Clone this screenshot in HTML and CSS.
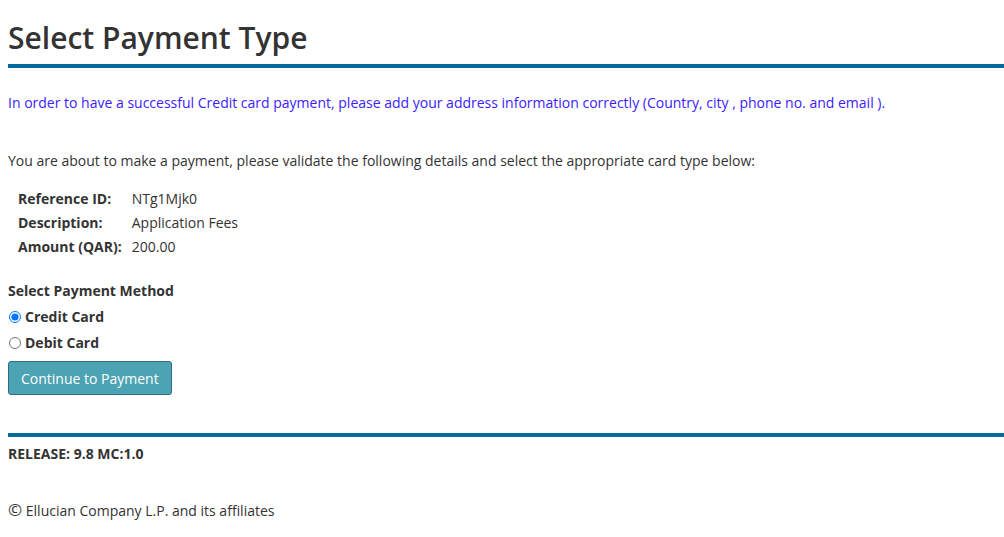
FILE: index.html
```html
<!DOCTYPE html>
<html lang="en">
<head>
  <meta charset="UTF-8">
  <title>Select Payment Type</title>
  <link rel="stylesheet" href="styles.css">
</head>
<body>

<h1 class="pt-title">Select Payment Type</h1>

<p class="pt-notice">In order to have a successful Credit card payment, please add your address information correctly (Country, city , phone no. and email ).</p>

<p class="pt-intro">You are about to make a payment, please validate the following details and select the appropriate card type below:</p>

<table class="pt-details">
  <tr>
    <th>Reference ID:</th>
    <td>NTg1Mjk0</td>
  </tr>
  <tr>
    <th>Description:</th>
    <td>Application Fees</td>
  </tr>
  <tr>
    <th>Amount (QAR):</th>
    <td>200.00</td>
  </tr>
</table>

<form class="pt-form">
  <div class="pt-label">Select Payment Method</div>
  <div class="pt-options">
    <label class="pt-radio">
      <input type="radio" name="cardType" value="credit" checked> Credit Card
    </label>
    <label class="pt-radio">
      <input type="radio" name="cardType" value="debit"> Debit Card
    </label>
  </div>
  <button type="button" class="pt-btn">Continue to Payment</button>
</form>

<div class="pt-footer">
  <div class="pt-release">RELEASE: 9.8 MC:1.0</div>
  <div class="pt-copy"><span class="pt-copy-sign">&copy;</span> Ellucian Company L.P. and its affiliates</div>
</div>

</body>
</html>
```

FILE: styles.css
```css
body {
  font-family: 'Open Sans', sans-serif;
  font-size: 14px;
  color: #333333;
  margin: 0 0 0 8px;
  background-color: #ffffff;
}

.pt-title {
  font-size: 30px;
  font-weight: 600;
  margin: 0;
  padding: 18px 0 6px;
  line-height: 40px;
  border-bottom: 4px solid #056b9e;
}

.pt-notice {
  color: #3a22ff;
  margin: 24px 0 0;
  line-height: 22px;
}

.pt-intro {
  margin: 36px 0 0;
  line-height: 22px;
}

.pt-details {
  border-collapse: collapse;
  margin: 15px 0 0 6px;
}

.pt-details th, .pt-details td {
  text-align: left;
  padding: 1px 4px;
  line-height: 22px;
}

.pt-details th {
  font-weight: 700;
  padding-right: 6px;
}

.pt-form {
  margin-top: 21px;
}

.pt-label {
  font-weight: 700;
  line-height: 22px;
}

.pt-options {
  margin-top: 2px;
}

.pt-radio {
  display: flex;
  align-items: center;
  font-weight: 700;
  line-height: 26px;
}

.pt-radio input {
  margin: 0 4px 0 1px;
  width: 12px;
  height: 12px;
}

.pt-btn {
  margin-top: 5px;
  background-color: #4ba3b4;
  color: #ffffff;
  border: 1px solid #2e6c88;
  border-radius: 3px;
  font-family: 'Open Sans', sans-serif;
  font-size: 14px;
  padding: 0 12px;
  height: 34px;
  cursor: pointer;
}

.pt-footer {
  margin-top: 38px;
  border-top: 4px solid #056b9e;
}

.pt-release {
  font-weight: 700;
  font-size: 14px;
  margin-top: 7px;
  line-height: 20px;
}

.pt-copy {
  margin-top: 37px;
  line-height: 20px;
}

.pt-copy-sign {
  font-size: 17px;
  line-height: 14px;
}
```
